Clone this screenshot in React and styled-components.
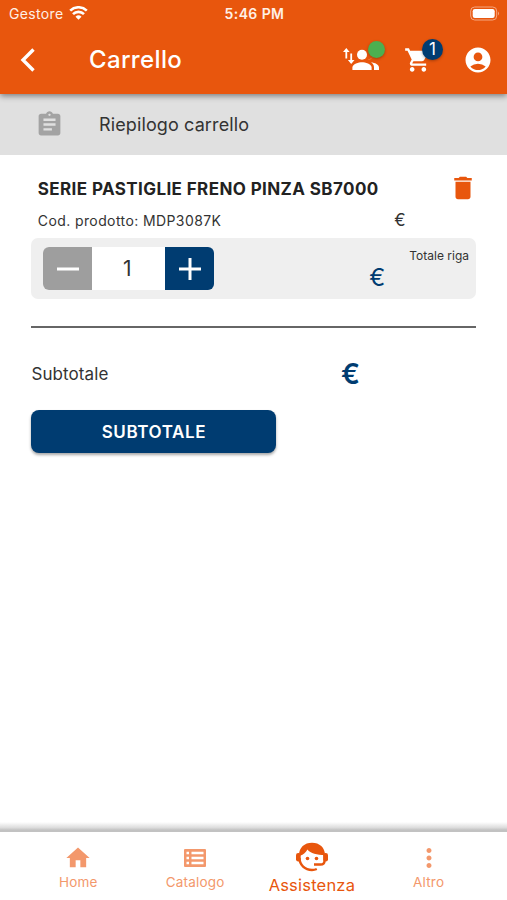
import React from 'react';
import styled, { createGlobalStyle } from 'styled-components';
import {
  MdAccountCircle,
  MdAssignment,
  MdDelete,
  MdHome,
  MdMoreVert,
  MdShoppingCart,
} from 'react-icons/md';

const ORANGE = '#e8560d';
const BLUE = '#003c71';

const GlobalStyle = createGlobalStyle`
  * {
    box-sizing: border-box;
  }

  body {
    margin: 0;
    background: #fff;
    color: #333;
    font-family: Inter, "Liberation Sans", sans-serif;
  }

  svg {
    display: block;
    flex: none;
  }

  button {
    padding: 0;
    border: 0;
    background: none;
    color: inherit;
    font: inherit;
  }
`;

const Screen = styled.div`
  display: flex;
  flex-direction: column;
  height: 900px;
  overflow: hidden;
`;

const Header = styled.header`
  position: relative;
  height: 94px;
  background: ${ORANGE};
  color: #fff;
  box-shadow: 0 2px 6px rgba(0, 0, 0, 0.45);
`;

const StatusBar = styled.div`
  display: grid;
  grid-template-columns: 1fr auto 1fr;
  align-items: center;
  height: 27px;
  padding: 0 7px 0 9px;
  color: #fff0e6;
`;

const Carrier = styled.div`
  display: flex;
  align-items: center;
  gap: 5px;
  font-size: 14px;
  letter-spacing: 0.35px;

  svg {
    margin-top: -2px;
    color: #fff;
  }
`;

const Clock = styled.span`
  font-size: 14px;
  font-weight: 600;
  letter-spacing: 0.4px;
`;

const Battery = styled.svg`
  justify-self: end;
`;

const Toolbar = styled.div`
  display: flex;
  align-items: center;
  height: 65px;
  padding: 0 14px 0 20px;
`;

const PageTitle = styled.h1`
  flex: 1;
  margin: 0 0 0 53px;
  font-size: 24px;
  font-weight: 500;
  letter-spacing: 0.35px;
`;

const Action = styled.button`
  position: relative;
  margin-left: ${({ $gap }) => $gap || 0}px;
`;

const Badge = styled.span`
  position: absolute;
  top: ${({ $top }) => $top}px;
  right: ${({ $right }) => $right}px;
  width: ${({ $size }) => $size}px;
  height: ${({ $size }) => $size}px;
  border-radius: 50%;
  background: ${({ $color }) => $color};
  box-shadow: 0 1px 3px rgba(0, 0, 0, 0.3);
  font-size: 17px;
  line-height: ${({ $size }) => $size}px;
  text-align: center;
`;

const SummaryBar = styled.div`
  display: flex;
  align-items: center;
  gap: 35px;
  height: 61px;
  padding-left: 35px;
  background: #e0e0e0;
  font-size: 18px;
  letter-spacing: 0.12px;

  svg {
    color: #a3a3a3;
  }
`;

const Content = styled.main`
  flex: 1;
  padding: 18px 31px 0 31.4px;
`;

const ItemHeader = styled.div`
  display: flex;
  align-items: center;
  justify-content: space-between;
  height: 30px;
  padding-left: 6.4px;

  svg {
    margin-right: -2px;
    color: ${ORANGE};
  }
`;

const ItemName = styled.h2`
  margin: 0;
  padding-top: 1px;
  color: #222;
  font-size: 17px;
  font-weight: 650;
  letter-spacing: 0.4px;
  white-space: nowrap;
`;

const ItemCode = styled.div`
  display: flex;
  align-items: center;
  justify-content: space-between;
  height: 35px;
  padding: 0 70px 0 6.4px;
  font-size: 14px;
  letter-spacing: 0.4px;
`;

const Euro = styled.span`
  color: ${({ $color }) => $color || '#333'};
  font-size: ${({ $size }) => $size}px;
  font-weight: ${({ $weight }) => $weight || 400};
  line-height: 1;
`;

const ItemPanel = styled.div`
  display: flex;
  align-items: center;
  height: 61px;
  padding: 0 7px 0 12px;
  border-radius: 7px;
  background: #efefef;
`;

const Stepper = styled.div`
  display: grid;
  grid-template-columns: 49px 73px 49px;
  height: 43px;
  overflow: hidden;
  border-radius: 6px;
  background: #fff;
`;

const StepButton = styled.button`
  display: grid;
  place-items: center;
  background: ${({ $color }) => $color};
`;

const Quantity = styled.span`
  display: grid;
  place-items: center;
  padding-right: 3px;
  font-size: 21px;
`;

const RowTotal = styled.div`
  display: flex;
  flex: 1;
  justify-content: flex-end;
  align-self: stretch;
  gap: 24px;
  padding-top: 10px;
  font-size: 12px;

  ${Euro} {
    margin-top: 18px;
  }
`;

const Divider = styled.hr`
  height: 2px;
  margin: 27px 0 0;
  border: 0;
  background: #666;
`;

const Subtotal = styled.div`
  display: flex;
  align-items: center;
  justify-content: space-between;
  height: 50px;
  margin-top: 21px;
  padding-right: 116px;
  font-size: 17px;
  letter-spacing: 0.1px;
`;

const SubtotalButton = styled.button`
  width: 245px;
  height: 43px;
  margin-top: 11px;
  padding-top: 1px;
  border-radius: 8px;
  background: ${BLUE};
  box-shadow: 0 2px 3px rgba(0, 0, 0, 0.35);
  color: #fff;
  font-size: 17px;
  font-weight: 600;
  letter-spacing: 0.6px;
`;

const NavShade = styled.div`
  height: 10px;
  background: linear-gradient(#fff, #ddd 55%, #c2c2c2 80%);
`;

const BottomNav = styled.nav`
  display: grid;
  grid-template-columns: repeat(4, 1fr);
  height: 68px;
  padding: 0 20px;
`;

const NavItem = styled.a`
  display: grid;
  grid-template-rows: 52px 0;
  justify-items: center;
  align-items: center;
  color: ${({ $active }) => ($active ? ORANGE : '#f3986c')};
  font-size: ${({ $active }) => ($active ? 16.5 : 13.5)}px;
  letter-spacing: 0.2px;

  svg {
    margin-top: ${({ $active }) => ($active ? -3 : 0)}px;
  }

  span {
    margin-top: ${({ $active }) => ($active ? 2 : -4)}px;
  }
`;

const WifiIcon = () => (
  <svg width="19" height="14" viewBox="0 0 19 14" fill="none" stroke="currentColor" strokeWidth="2.6">
    <path d="M1.2 4.6a12 12 0 0 1 16.6 0" />
    <path d="M4 8.1a7.8 7.8 0 0 1 11 0" />
    <path d="M9.5 13.7l-3-3a4.3 4.3 0 0 1 6 0z" fill="currentColor" stroke="none" />
  </svg>
);

const BatteryIcon = () => (
  <Battery width="30" height="15" viewBox="0 0 30 15">
    <rect x="0.7" y="1" width="26" height="13" rx="4" fill="none" stroke="#f5a781" />
    <rect x="2.7" y="3" width="22" height="9" rx="2.2" fill="#fff" />
    <path d="M28 5.5q2 2 0 4z" fill="#f5a781" />
  </Battery>
);

const BackIcon = () => (
  <svg width="16" height="24" viewBox="0 0 16 24" fill="none" stroke="currentColor" strokeWidth="3.4">
    <path d="M13.5 1.5L3 12l10.5 10.5" />
  </svg>
);

const SwitchUserIcon = () => (
  <svg width="38" height="24" viewBox="0 0 38 24" fill="currentColor">
    <path d="M3.3 0l3.3 4H4.2v6.5H2.4V4H0zM8.2 16l-3.3-4h2.4V5.500h1.800V12h2.400z" />
    <circle cx="19" cy="6.800" r="5" />
    <path d="M9.400 22v-2.500c0-3.600 6.400-5.300 9.600-5.300s9.600 1.700 9.600 5.300V22z" />
    <path d="M25 11.800a5 5 0 0 0 0-10c3.400 0 5 2.300 5 5s-2 5-5 5zM28 14.300c4 .6 8 2.200 8 5.200V22h-5v-2.500c0-2.300-1.100-4-3-5.200z" />
  </svg>
);

const CatalogIcon = () => (
  <svg width="22" height="18" viewBox="0 0 22 18" fill="none">
    <rect width="22" height="18" rx="1" fill="currentColor" />
    <path d="M2.5 4H5M2.5 9H5M2.5 14H5M7.5 4h12M7.5 9h12M7.5 14h12" stroke="#fff" strokeWidth="2.4" />
  </svg>
);

const SupportIcon = () => (
  <svg width="32" height="30" viewBox="0 0 32 30">
    <path
      d="M3.5 16C3.500 23 9 28 16 28q2.600 0 4.800-1M28.500 12v7q0 3.500-4 3.500H18"
      fill="none"
      stroke="currentColor"
      strokeWidth="2.4"
    />
    <path d="M3 13.500C3 5.500 8.500.8 16 .8S29 5.500 29 13c-8 0-14.500-1.500-17.500-5.500C9.500 11 7 12.500 4.700 13.500z" fill="currentColor" />
    <rect x="0" y="11" width="4.700" height="8.500" rx="2.2" fill="currentColor" />
    <rect x="27.300" y="11" width="4.700" height="8.500" rx="2.200" fill="currentColor" />
    <circle cx="11.500" cy="16.500" r="1.800" fill="currentColor" />
    <circle cx="20.500" cy="16.500" r="1.800" fill="currentColor" />
  </svg>
);

const StepIcon = ({ plus }) => (
  <svg width="24" height="24" viewBox="0 0 24 24" stroke="#fff" strokeWidth="3">
    <path d={plus ? 'M1 12h22M12 1v22' : 'M1 12h22'} />
  </svg>
);

const navItems = [
  { label: 'Home', icon: <MdHome size={28} /> },
  { label: 'Catalogo', icon: <CatalogIcon /> },
  { label: 'Assistenza', icon: <SupportIcon />, active: true },
  { label: 'Altro', icon: <MdMoreVert size={30} /> },
];

function AppHeader() {
  return (
    <Header>
      <StatusBar>
        <Carrier>
          Gestore
          <WifiIcon />
        </Carrier>
        <Clock>5:46 PM</Clock>
        <BatteryIcon />
      </StatusBar>
      <Toolbar>
        <Action>
          <BackIcon />
        </Action>
        <PageTitle>Carrello</PageTitle>
        <Action>
          <SwitchUserIcon />
          <Badge $size={17} $top={-7} $right={-4} $color="#4caf50" />
        </Action>
        <Action $gap={23}>
          <MdShoppingCart size={28} />
          <Badge $size={21} $top={-7} $right={-11} $color={BLUE}>1</Badge>
        </Action>
        <Action $gap={31}>
          <MdAccountCircle size={30} />
        </Action>
      </Toolbar>
    </Header>
  );
}

function CartItem({ name, code, quantity }) {
  return (
    <section>
      <ItemHeader>
        <ItemName>{name}</ItemName>
        <MdDelete size={30} />
      </ItemHeader>
      <ItemCode>
        <span>Cod. prodotto: {code}</span>
        <Euro $size={17}>€</Euro>
      </ItemCode>
      <ItemPanel>
        <Stepper>
          <StepButton $color="#9e9e9e">
            <StepIcon />
          </StepButton>
          <Quantity>{quantity}</Quantity>
          <StepButton $color={BLUE}>
            <StepIcon plus />
          </StepButton>
        </Stepper>
        <RowTotal>
          <Euro $size={24} $color={BLUE}>€</Euro>
          <span>Totale riga</span>
        </RowTotal>
      </ItemPanel>
    </section>
  );
}

export default function App() {
  return (
    <>
      <GlobalStyle />
      <Screen>
        <AppHeader />
        <SummaryBar>
          <MdAssignment size={29} />
          Riepilogo carrello
        </SummaryBar>
        <Content>
          <CartItem name="SERIE PASTIGLIE FRENO PINZA SB7000" code="MDP3087K" quantity={1} />
          <Divider />
          <Subtotal>
            Subtotale
            <Euro $size={28} $weight={600} $color={BLUE}>€</Euro>
          </Subtotal>
          <SubtotalButton>SUBTOTALE</SubtotalButton>
        </Content>
        <NavShade />
        <BottomNav>
          {navItems.map(({ label, icon, active }) => (
            <NavItem key={label} $active={active}>
              {icon}
              <span>{label}</span>
            </NavItem>
          ))}
        </BottomNav>
      </Screen>
    </>
  );
}
